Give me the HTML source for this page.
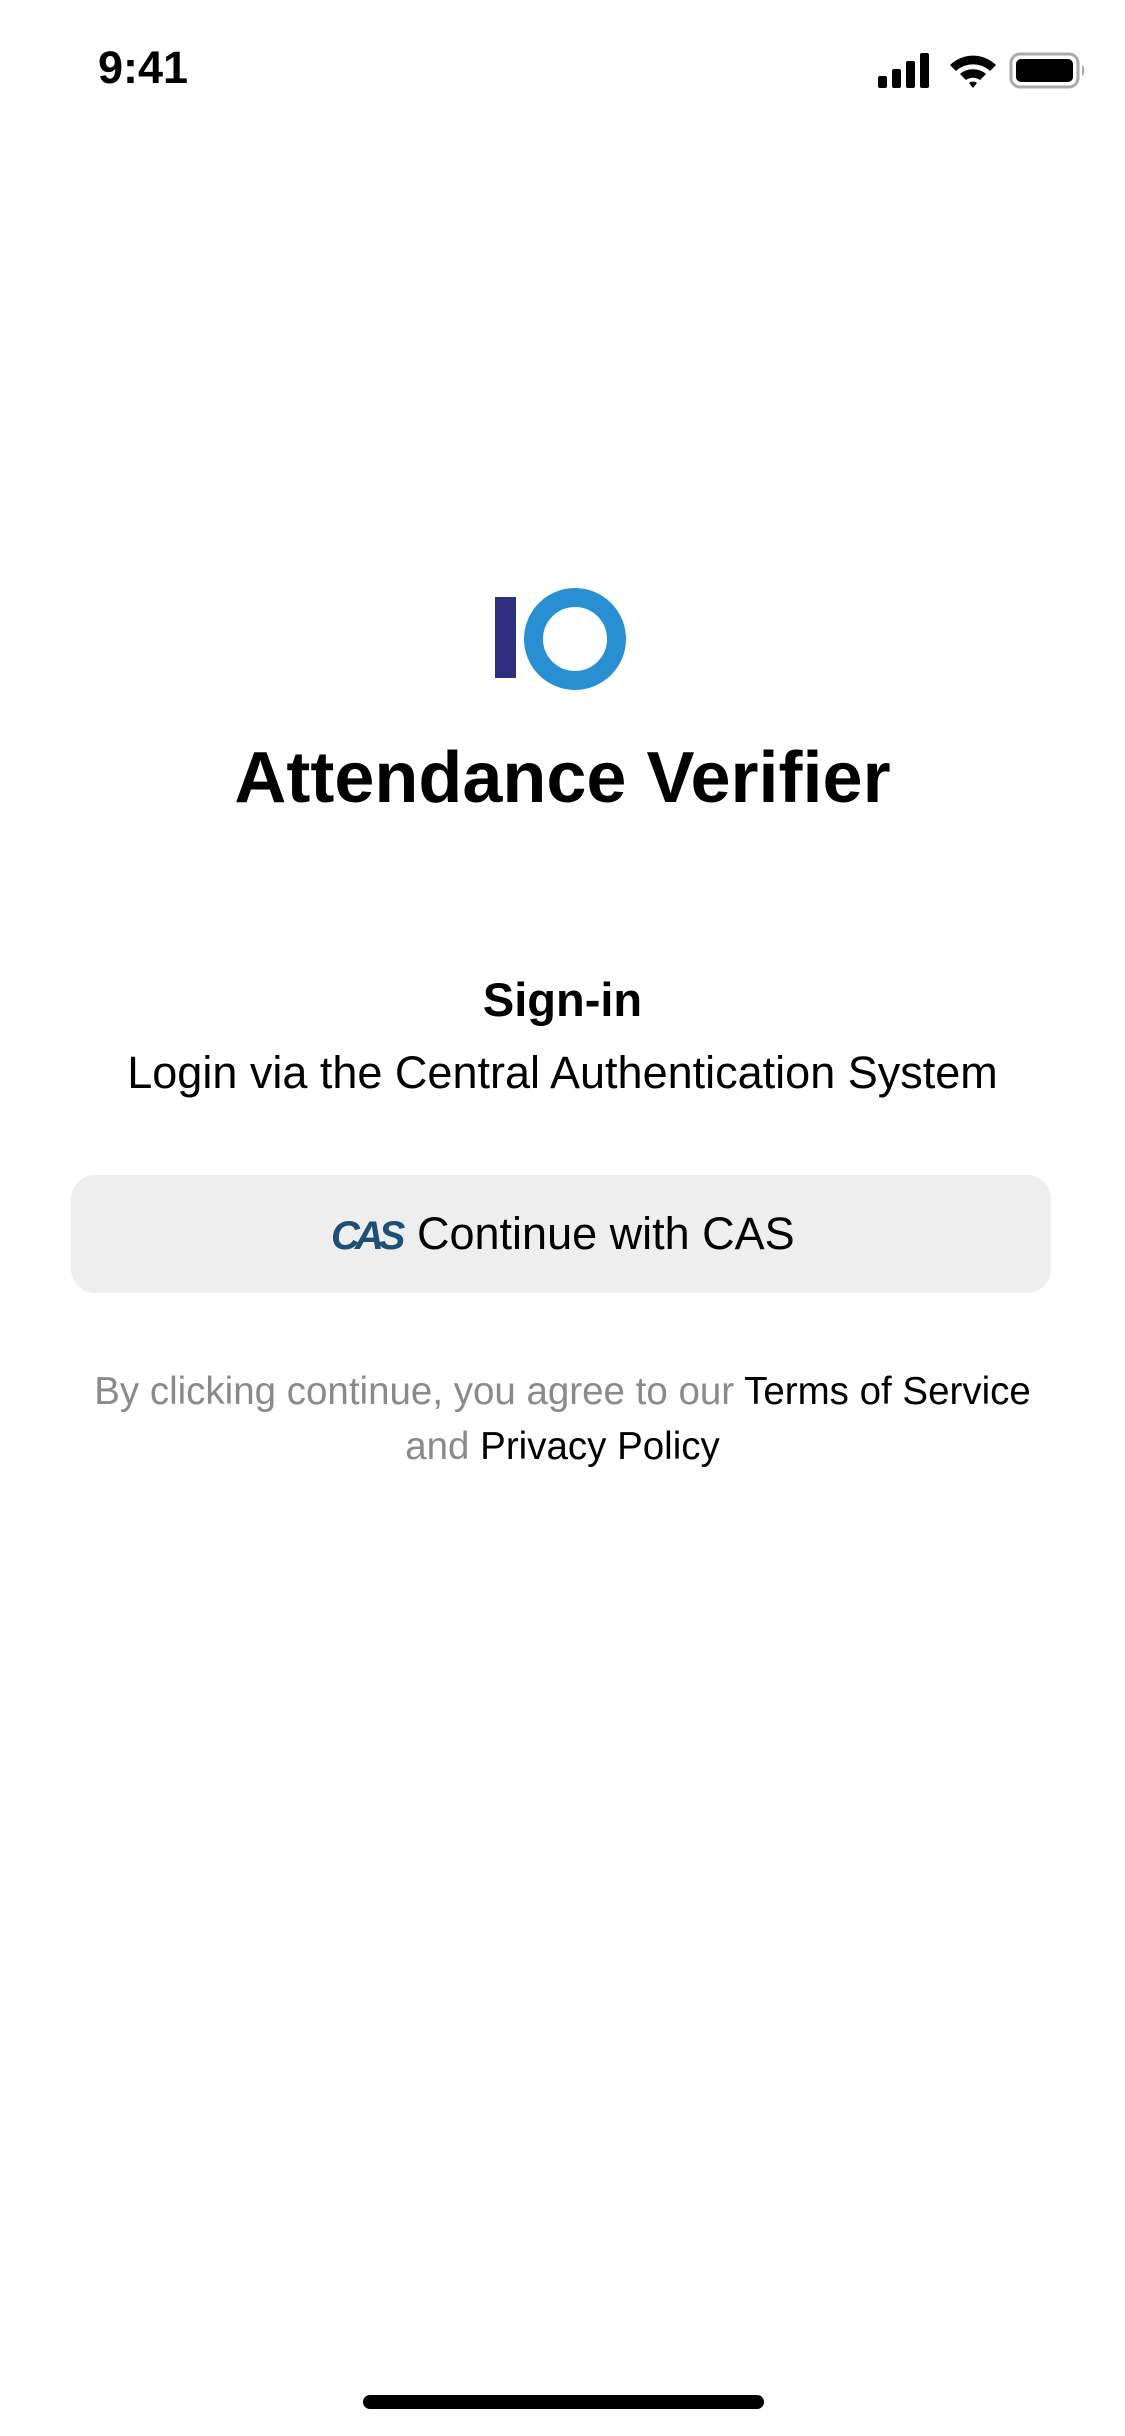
<!DOCTYPE html>
<html><head><meta charset="utf-8"><style>
html,body{margin:0;padding:0;background:#fff;}
body{width:1125px;height:2436px;position:relative;overflow:hidden;font-family:"Liberation Sans",sans-serif;color:#000;}
.a{position:absolute;white-space:nowrap;}
.c{left:0;width:1125px;text-align:center;}
</style></head><body>
<div class="a" style="left:98px;top:42px;font-size:45px;font-weight:bold;line-height:52px;">9:41</div>
<svg class="a" style="left:878px;top:50px" width="210" height="40" viewBox="0 0 210 40">
<rect x="0" y="26" width="9" height="12" rx="2"/>
<rect x="14" y="19" width="9" height="19" rx="2"/>
<rect x="28" y="11" width="9" height="27" rx="2"/>
<rect x="42" y="3" width="9" height="35" rx="2"/>
<path d="M72 15 A33 33 0 0 1 118 15 L112 21 A25 25 0 0 0 78 21 Z"/>
<path d="M82 24 A20 20 0 0 1 108 24 L102 30 A12 12 0 0 0 88 30 Z"/>
<path d="M91 33 A6 6 0 0 1 99 33 L95 38 Z"/>
<rect x="133" y="4" width="67" height="33" rx="9" fill="none" stroke="#aaa" stroke-width="3"/>
<rect x="138" y="9" width="57" height="23" rx="5"/>
<path d="M204 15 a4 6 0 0 1 0 11 Z" fill="#aaa"/>
</svg>
<div class="a" style="left:495px;top:597px;width:21px;height:81px;background:#2f2f80;"></div>
<div class="a" style="left:524px;top:588px;width:64px;height:64px;border:19px solid #2890d2;border-radius:50%;"></div>
<div class="a c" style="top:732px;font-size:72px;font-weight:bold;line-height:92px;">Attendance Verifier</div>
<div class="a c" style="top:972px;font-size:47px;font-weight:bold;line-height:56px;">Sign-in</div>
<div class="a c" style="top:1047px;font-size:45px;line-height:52px;">Login via the Central Authentication System</div>
<div class="a" style="left:71px;top:1175px;width:980px;height:118px;background:#eeeeee;border-radius:24px;"></div>
<div class="a" style="left:331px;top:1212px;font-size:40px;font-weight:bold;font-style:italic;color:#1d4f78;letter-spacing:-5px;line-height:48px;">CAS</div>
<div class="a" style="left:417px;top:1208px;font-size:45px;line-height:52px;">Continue with CAS</div>
<div class="a c" style="top:1368px;font-size:38.5px;line-height:48px;color:#8a8a8a;">By clicking continue, you agree to our <span style="color:#000">Terms of Service</span></div>
<div class="a c" style="top:1423px;font-size:38.5px;line-height:48px;color:#8a8a8a;">and <span style="color:#000">Privacy Policy</span></div>
<div class="a" style="left:363px;top:2395px;width:401px;height:14px;border-radius:7px;background:#000;"></div>
</body></html>
